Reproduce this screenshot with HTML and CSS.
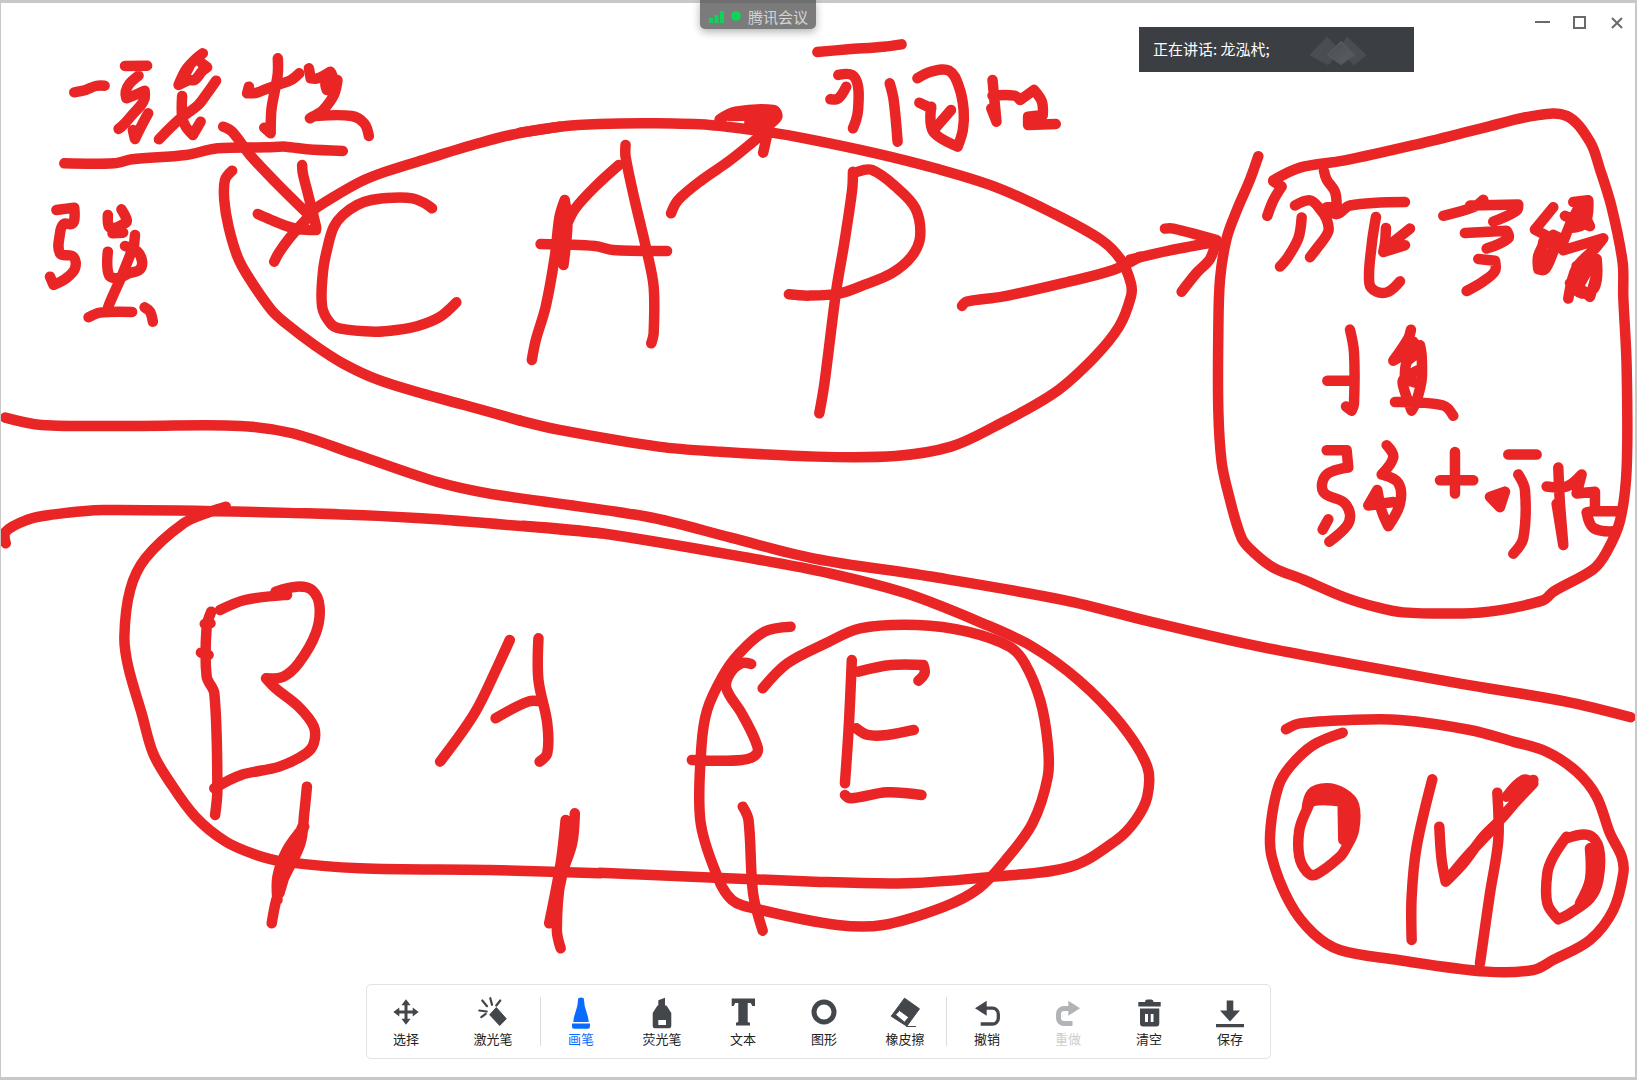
FILE: index.html
```html
<!DOCTYPE html>
<html lang="zh-CN">
<head>
<meta charset="utf-8">
<title>腾讯会议</title>
<link rel="stylesheet" href="styles.css">
</head>
<body>
<div class="window">
  <svg class="canvas" width="1634" height="1074" viewBox="1 3 1634 1074">
    <g class="ink" transform="translate(0 30) scale(.3571 .3333)">
      <path d="M208 187L240 180L268 168L293 167"/>
      <path d="M350 108L412 107M388 137L362 162L352 185L354 205L378 195L405 182L405 205L395 225L370 255L345 285L332 297M415 250L395 290L378 327L372 300"/>
      <path d="M568 70L545 90L520 120L500 165L530 150L545 150L565 125L580 112L565 100M530 110L510 150"/>
      <path d="M605 152L580 190L555 225L500 270L445 328M510 198L510 260L520 290L540 315L562 275"/>
      <path d="M697 170L692 190L720 188L750 175L790 160L815 150L838 130M778 85L778 130L770 180L760 240L758 310L740 293"/>
      <path d="M865 115L870 145L890 145L925 125L930 140L912 155L915 180L945 150L935 195L905 240L885 255L868 265L880 258L985 258L1020 280L1033 318"/>
      <path d="M180 400L320 400L370 388L520 375L610 355L750 352L800 350L860 358L960 363"/>
      <path d="M625 290L650 305L700 375L775 460L860 550M846 405L848 430L862 490L885 590L885 600L840 598L800 587L760 570L722 552M860 565L810 625L780 670L768 695"/>
      <path d="M1210 535L1190 520L1155 505L1100 503L1040 510L1000 525L960 555L935 590L920 640L905 720L902 830L925 880L950 895L1050 905L1110 900L1170 888L1230 862L1278 817"/>
      <path d="M650 422L630 450L628 510L640 590L665 680L695 740L760 840L800 880L880 945L960 1000L1060 1050L1180 1090L1300 1125L1456 1172"/>
      <path d="M870 545L920 510L1010 455L1080 425L1200 385L1340 340L1430 315L1568 290"/>
      <path d="M158 540L208 533L208 570L200 582L178 582L168 610L168 670L205 680L210 715L185 745L150 765L140 740"/>
      <path d="M302 555L305 590L318 595L350 580L355 570L340 538M315 610L345 608"/>
      <path d="M378 615L375 650M350 648L385 665L398 695L390 720L360 730L330 745L305 735L302 665"/>
      <path d="M370 660L340 740L305 825L300 845M248 862L280 848L370 846M405 832L420 845L428 875"/>
    </g>
    <g class="ink" transform="translate(520 30) scale(.3954 .3333)">
      <path d="M0 308L100 290L200 282L340 280L480 285L620 305L720 325L900 370L1050 415L1200 470L1340 545L1470 630L1520 690L1545 760L1545 800L1515 890L1450 985L1350 1090L1200 1190L1090 1250L950 1278L750 1280L500 1265L350 1250L100 1200L0 1172"/>
      <path d="M113 510L100 560L88 680L65 830L40 930L30 990M113 510L120 580L110 705L95 650M120 580L140 535L190 470L250 405"/>
      <path d="M267 345L267 380L290 510L320 660L338 770L338 910L332 940M52 642L190 648L235 660L372 663"/>
      <path d="M382 550L400 510L460 450L530 392L620 305M505 268L545 245L640 240L650 262L620 290M530 258L640 255L635 280L580 278M628 300L615 368"/>
      <path d="M842 425L840 480L820 640L800 780L770 1060L757 1150M855 425L890 420L950 470L1000 535L1012 620L990 680L940 730L870 765L810 790L730 797L680 793"/>
      <path d="M1118 828L1130 815L1220 800L1370 760L1500 720L1568 680"/>
      <path d="M752 66L830 58L920 50L965 43"/>
      <path d="M805 135L840 135L855 170L855 240L850 270L842 295M825 170L805 205L785 208M935 160L945 210L955 335"/>
      <path d="M1005 145L1040 125L1085 122L1110 170L1122 240L1120 300L1107 350L1045 305L1040 230M1010 218L1040 235M1090 240L1050 295"/>
      <path d="M1195 150L1205 275L1192 235M1195 197L1250 197L1265 210L1300 180L1320 215L1322 255L1285 260L1285 285L1355 282"/>
    </g>
    <g class="ink" transform="translate(1130 90) scale(.3333 .3448)">
      <path d="M0 492L120 465L260 440M105 402L130 402L260 435M258 440L240 490L200 530L155 585"/>
      <path d="M385 192L360 260L320 350L290 430L270 550L265 700L265 930L275 1080L295 1170L335 1300L370 1340L430 1385L520 1420L640 1470L740 1500L820 1515L1000 1518L1100 1510L1240 1480L1270 1455L1390 1390L1430 1340L1470 1250L1490 1100L1490 800L1480 600L1478 500L1445 340L1410 230L1380 150L1310 75L1210 75L1060 110L850 160L640 205L510 225L430 262"/>
      <path d="M430 265L455 280L430 320L412 365M582 235L590 260L615 295L620 340L590 340L620 360L660 335L825 325M495 335L540 320L570 345L590 375L595 410L560 460L540 485M515 370L505 430L470 490L450 512"/>
      <path d="M738 368L725 450L718 560L740 585L775 585L810 555M768 400L765 445L760 470L825 450M840 402L765 460"/>
      <path d="M940 365L1030 340L1060 318M1020 335L1165 332L1160 350L1090 382M1005 415L1130 408L1135 430L1070 460M1045 490L1095 495L1095 525L1060 555L1010 583"/>
      <path d="M1270 340L1215 405L1255 425L1225 480L1225 520L1245 520L1270 470L1290 430L1270 420M1240 440L1225 510L1255 490L1275 440M1300 465L1420 430L1395 460L1340 515L1315 605M1305 365L1380 395L1350 335L1325 380L1300 440M1330 325L1375 320L1365 385L1320 400M1400 490L1400 530L1380 600L1345 570L1375 520L1350 550M1340 510L1400 490L1395 570L1355 590L1320 560"/>
      <path d="M660 695L672 760L672 910L665 930L648 918M592 843L670 843M843 695L835 720L790 785L870 740L875 770L875 840L860 900L845 930L820 860L820 840L870 810M850 730L860 760L830 790L825 840L860 850M795 905L940 915L970 945"/>
      <path d="M590 1045L650 1045L655 1095L590 1115L580 1165L640 1195L660 1230L650 1265L598 1310M595 1245L578 1275M770 1030L790 1065L755 1115L805 1140L810 1200L775 1265L755 1220L742 1160L715 1205L790 1195"/>
      <path d="M975 1050L975 1170M930 1132L1030 1132M1135 1057L1220 1057M1165 1115L1185 1160L1180 1300L1150 1345M1125 1165L1080 1180L1110 1210L1125 1165"/>
      <path d="M1285 1095L1290 1200L1300 1320L1280 1200M1250 1150L1310 1150L1355 1115L1340 1170L1395 1165L1395 1220L1370 1225L1390 1270L1450 1280M1395 1222L1470 1222"/>
    </g>
    <g class="ink" transform="scale(1.044)">
      <path d="M5 400L40 407L130 408L230 408L280 415L340 435L420 462L470 473L620 495L700 515L780 535L890 552L1020 575L1100 595L1200 618L1300 637L1400 655L1500 672L1562 687"/>
    </g>
    <g class="ink" transform="translate(0 480) scale(.3827 .3333)">
      <path d="M15 190L15 155L70 120L130 105L270 90L800 100L1100 115L1400 142L1568 160"/>
      <path d="M590 80L550 95L480 130L380 235L340 330L325 470L335 560L370 700L400 820L440 900L510 1010L590 1085L670 1125L740 1145L940 1165L1280 1170L1568 1180"/>
      <path d="M552 395L540 440L540 590L560 640L568 930L562 1005M535 432L550 430M525 518L545 525"/>
      <path d="M575 390L640 360L740 345L750 345L720 335L775 320L815 330L835 380L825 460L780 550L740 590L695 595L720 625L780 680L820 740L820 790L800 820L730 860L630 885L560 925"/>
      <path d="M802 920L795 1000L785 1090L740 1200L722 1260L710 1330M795 1040L750 1110L725 1190L725 1260M780 1060L745 1180M730 1240L760 1130L790 1040"/>
      <path d="M1332 480L1300 560L1240 700L1150 845M1407 475L1407 600L1430 730L1430 820L1410 845M1295 715L1380 665L1415 665"/>
      <path d="M1502 1000L1495 1090L1465 1200L1455 1350L1465 1405M1478 1020L1465 1150L1435 1330M1490 1040L1470 1180L1445 1300"/>
    </g>
    <g class="ink" transform="translate(600 560) scale(.3827 .3333)">
      <path d="M-200 -103L0 -81L420 0L600 40L800 100L1000 190L1130 260L1250 360L1360 490L1430 620L1430 710L1400 780L1350 840L1230 920L1030 950L800 970L560 965L0 938"/>
      <path d="M498 200L430 215L360 285L320 350L280 450L265 560L262 780L300 930L345 1020L420 1050L620 1095L740 1095L900 1040L990 985L1060 900L1130 790L1170 650L1170 550L1150 420L1110 310L1070 260L960 215L830 195L680 205L590 250L490 310L425 385"/>
      <path d="M395 312L370 310L340 340L330 385L370 460L405 540L410 580L370 600L240 600M373 740L388 780L400 1000L425 1112"/>
      <path d="M658 300L650 500L640 670M675 335L760 315L845 315L848 340L832 362M670 505L700 525L750 525L820 510M640 705L655 715L750 697L840 705"/>
    </g>
    <g class="ink" transform="translate(1200 640) scale(.3333)">
      <path d="M258 268L300 250L450 240L600 240L810 270L940 305L1040 335L1130 395L1190 470L1230 580L1265 650L1270 700L1240 810L1170 900L1060 960L1000 990L860 995L580 958L420 930L340 880L270 790L215 650L212 560L235 440L270 380L340 315L428 278"/>
      <path d="M430 600L428 485L340 483L320 510L298 570L298 650L320 695L345 705L420 650L440 620L462 570L462 495L430 460L380 445L335 460L320 510M350 465L440 470M447 480L447 590"/>
      <path d="M697 418L650 620L635 770L635 900M718 560L725 660L737 725L790 670L850 590L910 530L1000 420M750 710L800 650L880 565M915 520L1000 430L970 420L920 470"/>
      <path d="M892 458L895 600L870 760L840 970"/>
      <path d="M1100 590L1060 650L1042 700L1042 790L1075 838L1110 820L1170 775L1195 720L1197 625L1165 585L1100 595M1170 625L1170 720L1140 790M1183 640L1183 720L1155 780"/>
    </g>
  </svg>

  <div class="meeting-pill">
    <svg class="signal" width="15" height="12" viewBox="0 0 15 12"><rect x="0" y="7" width="4" height="5"/><rect x="5.5" y="4" width="4" height="8"/><rect x="11" y="0" width="4" height="12"/></svg>
    <span class="pill-dot"></span>
    <span class="pill-title">腾讯会议</span>
  </div>

  <header class="topbar">
    <div class="speaker">
      <span class="speaker-text">正在讲话: 龙泓杙;</span>
      <svg class="speaker-mask" width="56" height="30" viewBox="0 0 56 30">
        <defs>
          <linearGradient id="maskfade" x1="0" y1="0" x2="1" y2="1">
            <stop offset="0" stop-color="#4a4d51"/>
            <stop offset="1" stop-color="#5b5e62"/>
          </linearGradient>
        </defs>
        <path class="m1" d="M1 20L17 3L30 16L18 29z"/>
        <path class="m1" d="M37 3L55 20L44 29L30 14z"/>
        <path class="m2" d="M18 20L31 7L44 20L31 29z"/>
      </svg>
    </div>
    <div class="win-controls">
      <svg width="15" height="12" viewBox="0 0 15 12"><path d="M0 5h15"/></svg>
      <svg width="13" height="13" viewBox="0 0 13 13"><rect x="1" y="1" width="11" height="11"/></svg>
      <svg class="win-close" width="12" height="12" viewBox="0 0 12 12"><path d="M1 1l10 10M11 1L1 11"/></svg>
    </div>
  </header>

  <nav class="toolbar">
    <div class="tool-group group-first">
      <div class="tool">
        <svg class="ico" width="30" height="30" viewBox="0 0 30 30"><path d="M15 2.300l4.600 6h-3.100v5.200h5.200v-3.100l6 4.600-6 4.600v-3.100h-5.200v5.200h3.100L15 27.700l-4.600-6h3.100v-5.200H8.300v3.100l-6-4.600 6-4.600v3.100h5.200V8.300h-3.100z"/></svg>
        <span class="label">选择</span>
      </div>
      <div class="tool">
        <svg class="ico" width="30" height="30" viewBox="0 0 30 30"><path class="solid" d="M18.300 10.500L28.300 21.800L21.700 28.500L11.700 17.800z"/><path class="ray" d="M12.300 1.200L14 7.800M4.300 3.500L9 9.200M1.300 13.500L8.700 14.500M3.300 20.200L7.700 16.800M22.300 3.500L18.300 8.500"/></svg>
        <span class="label">激光笔</span>
      </div>
    </div>
    <span class="divider"></span>
    <div class="tool-group">
      <div class="tool active">
        <svg class="ico" width="30" height="30" viewBox="0 0 30 30"><path d="M12 3Q12 .6 15 .6Q18 .6 18 3L18.700 9L22 20L22.800 25H7.200L8 20L11.300 9zM6 26.500H24V29.500Q24 31.700 22 31.700H8Q6 31.700 6 29.500z"/></svg>
        <span class="label">画笔</span>
      </div>
      <div class="tool">
        <svg class="ico" width="30" height="30" viewBox="0 0 30 30"><path fill-rule="evenodd" d="M11.300 3.200L18 .8V8.500H19.500L24.300 16V29A2.200 2.200 0 0 1 22.100 31.200H7.900A2.200 2.200 0 0 1 5.700 29V16L10.500 8.500H11.300zM11.300 23V28H19V23z"/></svg>
        <span class="label">荧光笔</span>
      </div>
      <div class="tool">
        <svg class="ico" width="30" height="30" viewBox="0 0 30 30"><path d="M3.700 1.500H27V9H24.300L22.800 6H19.700V25L22 25.800V28.500H8V25.800L10.300 25V6H7.200L5.700 9H3.700z"/></svg>
        <span class="label">文本</span>
      </div>
      <div class="tool">
        <svg class="ico" width="30" height="30" viewBox="0 0 30 30"><circle class="ring" cx="15" cy="15" r="10"/></svg>
        <span class="label">图形</span>
      </div>
      <div class="tool">
        <svg class="ico" width="30" height="30" viewBox="0 0 30 30"><path class="solid" fill-rule="evenodd" d="M14.500 1.200L29.500 11.800L16.800 29.200L1.200 19.200zM5.500 17.800L14.500 25.200L18.800 20.200L9.500 13.500z"/><path class="ray thin" d="M16.800 29.500H25.500"/></svg>
        <span class="label">橡皮擦</span>
      </div>
    </div>
    <span class="divider"></span>
    <div class="tool-group">
      <div class="tool">
        <svg class="ico" width="30" height="30" viewBox="0 0 30 30"><path d="M3 11.200L14.700 3.800V18.800z"/><path class="arrow-line" d="M13 11.200H20.500A5.800 5.800 0 0 1 26.300 17V21.200A5.800 5.800 0 0 1 20.500 27H8.700"/></svg>
        <span class="label">撤销</span>
      </div>
      <div class="tool disabled">
        <svg class="ico" width="30" height="30" viewBox="0 0 30 30"><path d="M27 11.200L15.300 3.800V18.800z"/><path class="arrow-line thick" d="M17 11.500H11A5.500 5.500 0 0 0 5.500 17V21A5.500 5.500 0 0 0 11 26.500H19.500"/></svg>
        <span class="label">重做</span>
      </div>
      <div class="tool">
        <svg class="ico" width="30" height="30" viewBox="0 0 30 30"><path fill-rule="evenodd" d="M11 5Q11 2.500 13 2.500H17.500Q19.500 2.500 19.500 5H26.700V9.500H4.300V5zM6 11.500H25.300V26.500Q25.300 29.500 22.300 29.500H9Q6 29.500 6 26.500zM11 17V25H14V17zM16.700 17V25H19.500V17z"/></svg>
        <span class="label">清空</span>
      </div>
      <div class="tool">
        <svg class="ico" width="30" height="30" viewBox="0 0 30 30"><path d="M11.700 3.500H18.300V13.500H25L15 24.500 5 13.500H11.700zM1 27H29V30.200H1z"/></svg>
        <span class="label">保存</span>
      </div>
    </div>
  </nav>
</div>
<script src="strokes.js"></script>
</body>
</html>
```
FILE: styles.css
```css
* { box-sizing: border-box; }
html, body { margin: 0; padding: 0; background: #fff; }
body { font-family: "Noto Sans CJK SC", "Liberation Sans", sans-serif; }

.window {
  position: relative;
  width: 1637px;
  height: 1080px;
  background: #fff;
  border-style: solid;
  border-color: #c8c8c8;
  border-width: 3px 2px 3px 1px;
  display: flex;
  flex-direction: column;
}

.canvas { position: absolute; left: 0; top: 0; }
.ink path {
  fill: none;
  stroke: #e92525;
  stroke-width: 10.5;
  stroke-linecap: round;
  stroke-linejoin: round;
  vector-effect: non-scaling-stroke;
}

.meeting-pill {
  position: absolute;
  left: 699px;
  top: -3px;
  width: 116px;
  height: 29px;
  padding: 0 0 0 9px;
  background: #7b7b7b;
  border-top: 3px solid #6e6e6e;
  border-radius: 0 0 5px 5px;
  box-shadow: 0 3px 8px rgba(0, 0, 0, .3);
  display: flex;
  align-items: center;
}
.signal { fill: #12d15a; margin-top: 2px; }
.pill-dot { width: 10px; height: 10px; border-radius: 50%; background: #12d15a; margin-left: 7px; }
.pill-title { color: #d4d4d4; font-size: 15px; margin-left: 7px; white-space: nowrap; }

.topbar {
  position: relative;
  display: flex;
  justify-content: flex-start;
  align-items: flex-start;
  padding: 24px 0 0 1138px;
}
.speaker {
  width: 275px;
  height: 45px;
  background: #3b3e42;
  display: flex;
  align-items: center;
  padding-left: 14px;
  color: #fff;
  font-size: 15px;
}
.speaker-text { width: 157px; white-space: nowrap; margin-top: -2px; }
.speaker-mask .m1 { fill: #4a4d51; stroke: #4a4d51; stroke-width: 2; stroke-linejoin: round; }
.speaker-mask .m2 { fill: url(#maskfade); stroke: #55585c; stroke-width: 2; stroke-linejoin: round; }

.win-controls {
  display: flex;
  align-items: center;
  gap: 23px;
  margin: -11px 0 0 121px;
}
.win-controls svg { fill: none; stroke: #6a6a6a; stroke-width: 2; }
.win-controls .win-close { margin-left: 2px; }

.toolbar {
  position: relative;
  align-self: flex-start;
  margin: auto 0 18px 365px;
  width: 905px;
  height: 75px;
  padding: 0 1px;
  background: #fff;
  border: 1px solid #e3e3e3;
  border-radius: 5px;
  display: flex;
  align-items: center;
}
.tool-group { display: flex; gap: 5px; }
.group-first { gap: 11px; margin-right: 9px; }
.divider { width: 1px; height: 49px; background: #dcdcdc; margin: 0 2px 0 3px; }
.group-first + .divider { margin: 0 2px 0 0; }

.tool {
  width: 76px;
  display: flex;
  flex-direction: column;
  align-items: center;
  color: #222;
}
.ico { display: block; fill: #43464b; overflow: visible; margin-top: 1px; }
.label { font-size: 13px; line-height: 18px; margin-top: 3px; white-space: nowrap; }
.active { color: #0a6cff; }
.active .ico { fill: #0a6cff; }
.disabled { color: #cfcfcf; }
.disabled .ico { fill: #b1b3b6; }
.solid { stroke: #43464b; stroke-width: 1; stroke-linejoin: round; }
.ray { fill: none; stroke: #43464b; stroke-width: 2.2; stroke-linecap: round; }
.ray.thin { stroke-width: 1.2; }
.ring { fill: none; stroke: #43464b; stroke-width: 5; }
.arrow-line { fill: none; stroke: #43464b; stroke-width: 3.3; }
.arrow-line.thick { stroke: #b1b3b6; stroke-width: 5; }
```
FILE: strokes.js
```js
// Whiteboard ink: turn each stroke's sampled points into a smooth pen curve.
function smoothStroke(points) {
  var n = points.length;
  var d = "M" + points[0].join(" ");
  if (n < 3) {
    return d + "L" + points[n - 1].join(" ");
  }
  var tangents = points.map(function (p, i) {
    if (i === 0 || i === n - 1) { return null; }
    var a = points[i - 1], b = points[i + 1];
    var ux = p[0] - a[0], uy = p[1] - a[1];
    var vx = b[0] - p[0], vy = b[1] - p[1];
    var cos = (ux * vx + uy * vy) / (Math.hypot(ux, uy) * Math.hypot(vx, vy) || 1);
    if (cos < 0.2) { return null; }
    var tx = b[0] - a[0], ty = b[1] - a[1];
    var len = Math.hypot(tx, ty) || 1;
    return [tx / len, ty / len];
  });
  for (var i = 0; i < n - 1; i++) {
    var p = points[i], q = points[i + 1];
    var h = Math.hypot(q[0] - p[0], q[1] - p[1]) / 3;
    var t0 = tangents[i] || [0, 0], t1 = tangents[i + 1] || [0, 0];
    d += "C" + (p[0] + t0[0] * h) + " " + (p[1] + t0[1] * h) + " " +
         (q[0] - t1[0] * h) + " " + (q[1] - t1[1] * h) + " " + q[0] + " " + q[1];
  }
  return d;
}

document.querySelectorAll(".ink path").forEach(function (path) {
  var subpaths = path.getAttribute("d").split("M").filter(Boolean);
  var d = subpaths.map(function (sub) {
    var pts = sub.split("L").map(function (pt) {
      return pt.trim().split(/\s+/).map(Number);
    });
    return smoothStroke(pts);
  }).join("");
  path.setAttribute("d", d);
});
```
